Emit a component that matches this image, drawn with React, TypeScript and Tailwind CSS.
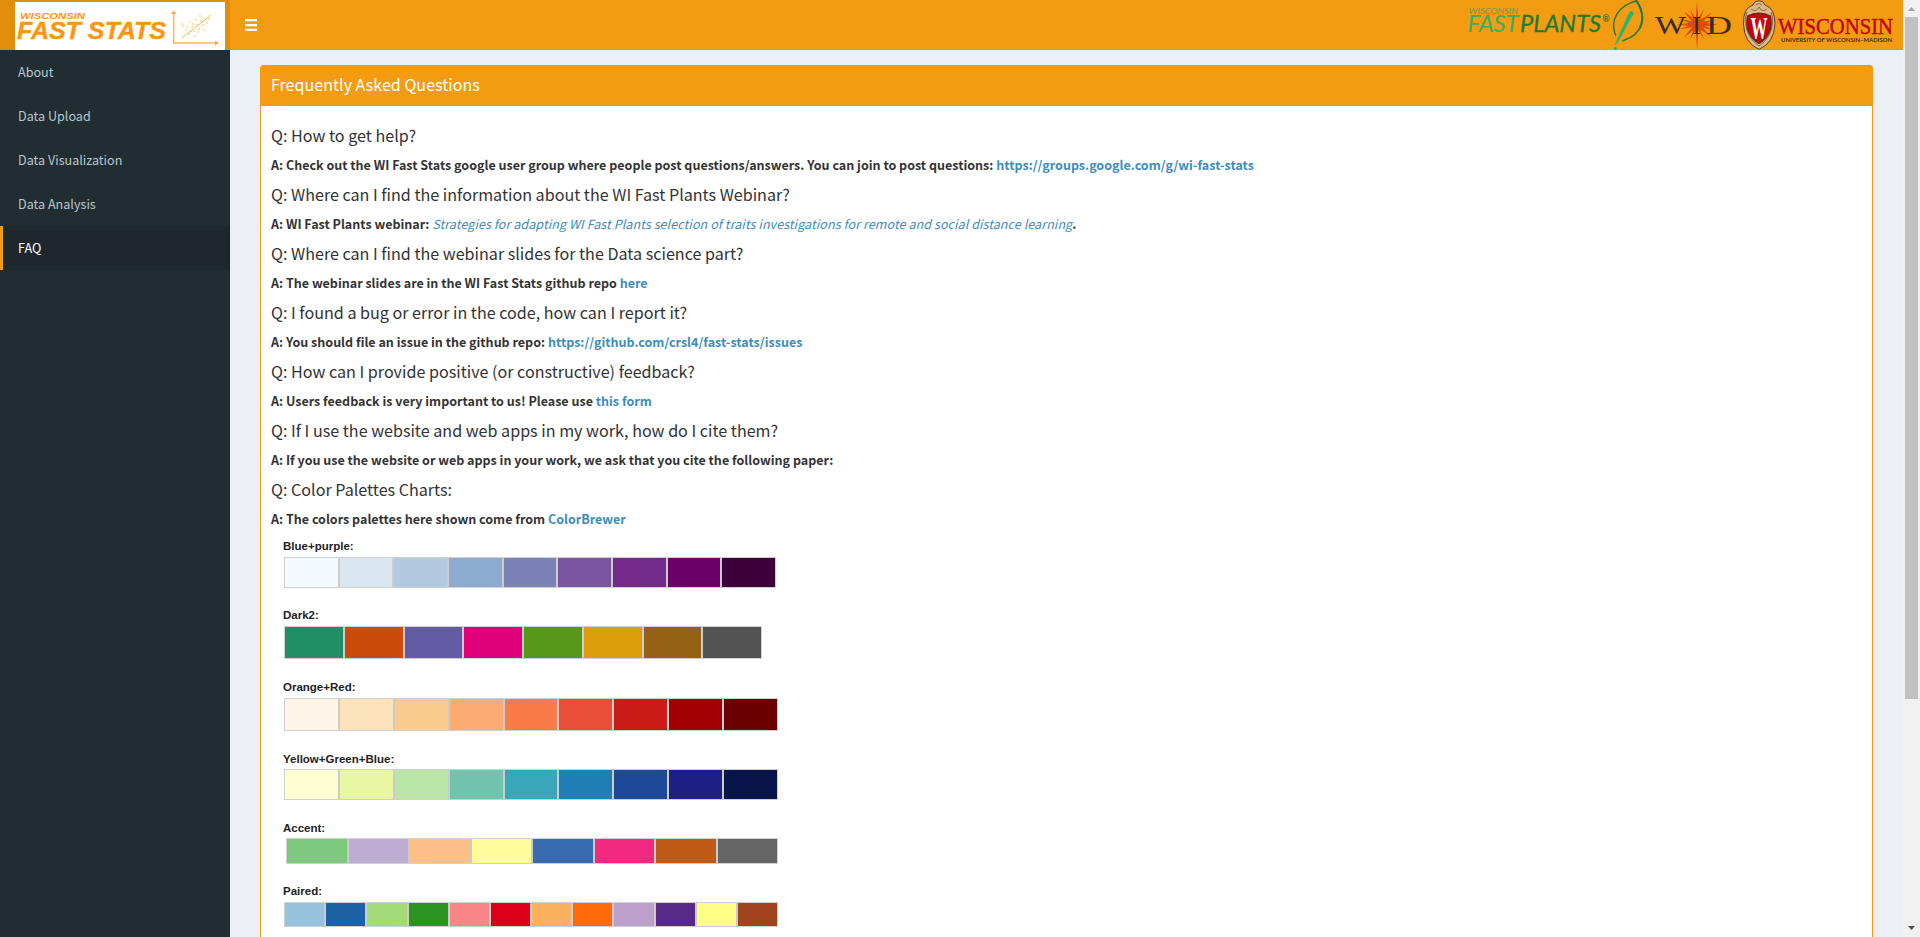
import React from "react";

const NAV = ["About", "Data Upload", "Data Visualization", "Data Analysis", "FAQ"];

const LINK = "text-[#3c8dbc]";

const FAQS: { q: string; a: React.ReactNode }[] = [
  { q: "Q: How to get help?", a: <>A: Check out the WI Fast Stats google user group where people post questions/answers. You can join to post questions: <a className={LINK}>https://groups.google.com/g/wi-fast-stats</a></> },
  { q: "Q: Where can I find the information about the WI Fast Plants Webinar?", a: <>A: WI Fast Plants webinar: <a className="font-normal tracking-[0.08px] text-[#3c8dbc] italic">Strategies for adapting WI Fast Plants selection of traits investigations for remote and social distance learning</a>.</> },
  { q: "Q: Where can I find the webinar slides for the Data science part?", a: <>A: The webinar slides are in the WI Fast Stats github repo <a className={LINK}>here</a></> },
  { q: "Q: I found a bug or error in the code, how can I report it?", a: <>A: You should file an issue in the github repo: <a className={LINK}>https://github.com/crsl4/fast-stats/issues</a></> },
  { q: "Q: How can I provide positive (or constructive) feedback?", a: <>A: Users feedback is very important to us! Please use <a className={LINK}>this form</a></> },
  { q: "Q: If I use the website and web apps in my work, how do I cite them?", a: <>A: If you use the website or web apps in your work, we ask that you cite the following paper:</> },
  { q: "Q: Color Palettes Charts:", a: <>A: The colors palettes here shown come from <a className={LINK}>ColorBrewer</a></> },
];

const PALETTES = [
  { name: "Blue+purple:", label: "h-[21px]", strip: "w-[492px] h-[31px] mb-[17px]", colors: ["#f4fafd", "#d9e7f0", "#b2c9df", "#8daccf", "#7a82b8", "#7b55a0", "#742a8a", "#6b0069", "#3e003b"] },
  { name: "Dark2:", label: "h-[21px]", strip: "w-[478px] h-[33px] mb-[18px]", colors: ["#1e8f66", "#cc4a0a", "#635aa4", "#df007a", "#579819", "#dd9d0a", "#946215", "#535353"] },
  { name: "Orange+Red:", label: "h-[21px]", strip: "w-[494px] h-[33px] mb-[18px]", colors: ["#fff4e6", "#fce2bb", "#fbcb8e", "#fcab72", "#fb7a49", "#e94f38", "#ca1b18", "#a00000", "#6b0000"] },
  { name: "Yellow+Green+Blue:", label: "h-[20px]", strip: "w-[494px] h-[31px] mb-[18px]", colors: ["#ffffd1", "#e9f7a3", "#bce6a6", "#70c4ae", "#38a7b9", "#1d7fb5", "#1c4a97", "#1d1f81", "#08144a"] },
  { name: "Accent:", label: "h-[20px]", strip: "ml-[2px] w-[492px] h-[26px] mb-[17px]", colors: ["#7fc97f", "#beadd3", "#fdc088", "#fffc99", "#386bb0", "#f12981", "#bf5a17", "#666666"] },
  { name: "Paired:", label: "h-[21px]", strip: "w-[494px] h-[25px] mb-[18px]", colors: ["#96c2dc", "#1c62a5", "#a4db7a", "#2b931f", "#f98588", "#db0017", "#fbb25e", "#ff6a0a", "#bca0cb", "#572a88", "#ffff88", "#9f441f"] },
];

const DOTS = [[183,26],[186,30],[190,22],[192,27],[194,31],[197,25],[199,29],[201,21],[203,25],[206,19],[200,16],[207,23],[189,34],[195,36],[204,30],[182,24],[187,27],[198,32],[193,24],[209,19],[196,20],[191,31]];

function FastStatsLogo() {
  return (
    <svg className="block h-12 w-[210px] bg-white" viewBox="15 2 210 48">
      <g fill="#fd960f" fontFamily="Liberation Sans, Arial, sans-serif" fontWeight="bold" fontStyle="italic">
        <text x="20" y="18.5" fontSize="8.3" textLength="65" lengthAdjust="spacingAndGlyphs">WISCONSIN</text>
        <text x="17" y="39.2" fontSize="23.5" stroke="#fd960f" strokeWidth="0.4" textLength="149" lengthAdjust="spacingAndGlyphs">FAST STATS</text>
      </g>
      <g stroke="#fbb562" strokeWidth="1.5" fill="none">
        <path d="M173.700 14V43H216" />
        <path d="M182 38L211 15" strokeWidth="1" />
      </g>
      <path d="M171 14l2.700-3.500 2.700 3.500zM215 40.500l4 2.500-4 2.500z" fill="#fca646" />
      {DOTS.map(([x, y], i) => <circle key={i} cx={x} cy={y} r="0.8" fill="#f4c02e" />)}
    </svg>
  );
}

const RAYS = [[0,-23,1.8],[0,25,1.8],[21,0,2.6],[-20,0,2.6],[15,-12,2.4],[-13,-13,2.4],[15,13,2.4],[-13,13,2.4],[7,-16,1.6],[-7,-15,1.6],[7,15,1.6],[-7,15,1.6],[20,-5,1.8],[18,6,1.8],[-18,5,1.8],[-18,-6,1.8]];

function PartnerLogos() {
  return (
    <svg className="block h-[50px] w-[443px]" viewBox="1460 0 443 50">
      <g fontFamily="Lato, sans-serif" fontStyle="italic">
        <text x="1468.5" y="13.6" fontSize="7.8" fill="#5fa63f" textLength="49.5" lengthAdjust="spacingAndGlyphs">WISCONSIN</text>
        <text x="1467.5" y="32.2" fontSize="22.5" fill="#3fae5c" stroke="#3fae5c" strokeWidth="0.2" textLength="51" lengthAdjust="spacingAndGlyphs">FAST</text>
        <text x="1520" y="32.2" fontSize="22.5" fill="#1d7a35" stroke="#1d7a35" strokeWidth="0.3" textLength="81" lengthAdjust="spacingAndGlyphs">PLANTS</text>
        <text x="1602.5" y="22" fontSize="8.5" fontWeight="bold" fontStyle="normal" fill="#1d7a35">®</text>
      </g>
      <g fill="none" stroke="#1f7c35" strokeLinecap="round">
        <path d="M1615.500 35C1609.500 20 1618 6 1636.500 0.800" strokeWidth="1.500" />
        <path d="M1636.500 0.800C1647.500 17 1643.500 34 1623 40.800" strokeWidth="1.500" />
        <path d="M1636.500 0.800C1642.500 10 1643.500 20 1640 28" strokeWidth="2" />
      </g>
      <path d="M1633.500 13Q1632 10 1629.500 12.500L1617 40.500L1615.500 44.500L1618 41.500Z" fill="#22b573" stroke="#22b573" strokeWidth="0.700" strokeLinejoin="round" />
      <circle cx="1615.200" cy="48.500" r="1.400" fill="#22b573" />
      {RAYS.map(([x, y, w], i) => {
        const n = Math.hypot(x, y);
        const px = (-y / n) * w, py = (x / n) * w;
        return <polygon key={i} points={`${1697 + px},${24.500 + py} ${1697 + x},${24.500 + y} ${1697 - px},${24.500 - py}`} fill="#df4a10" />;
      })}
      <g fontFamily="Liberation Serif, serif" fill="#3a2b20">
        <text x="1655" y="34" fontSize="26" textLength="31" lengthAdjust="spacingAndGlyphs">W</text>
        <text x="1692" y="34" fontSize="26" textLength="9" lengthAdjust="spacingAndGlyphs">I</text>
        <text x="1706" y="34" fontSize="26" textLength="26" lengthAdjust="spacingAndGlyphs">D</text>
      </g>
      <path d="M1759 0.700Q1764 1 1765 5Q1775 8 1775 24Q1774 43 1759 49.300Q1744 43 1743.500 24Q1743 8 1753 5Q1754 1 1759 0.700Z" fill="#deb98a" stroke="#5b3a22" strokeWidth="1" />
      <path d="M1751 9Q1756 13 1759 7Q1762 13 1767 9M1756 5Q1759 2 1762 5M1747 12Q1745 16 1745.800 24Q1747 38 1759 46Q1771 38 1772.500 24Q1773 16 1771 12" fill="none" stroke="#7d5a38" strokeWidth="0.900" />
      <path d="M1759 13Q1765 13 1770.500 16Q1774 34 1759 43.500Q1744 34 1747.500 16Q1753 13 1759 13Z" fill="#c5050c" stroke="#5b2a1a" strokeWidth="1.200" />
      <text x="1750.500" y="39" fontFamily="Liberation Serif, serif" fontWeight="bold" fontSize="31" fill="#fff" textLength="17" lengthAdjust="spacingAndGlyphs">W</text>
      <text x="1778" y="34" fontFamily="Liberation Serif, serif" fontSize="24" fill="#c5050c" stroke="#c5050c" strokeWidth="0.500" textLength="115" lengthAdjust="spacingAndGlyphs">WISCONSIN</text>
      <text x="1781" y="41.600" fontFamily="Lato, sans-serif" fontWeight="bold" fontSize="6.200" fill="#4a2c12" textLength="111" lengthAdjust="spacingAndGlyphs">UNIVERSITY OF WISCONSIN–MADISON</text>
    </svg>
  );
}

export default function App() {
  return (
    <div className="flex h-[937px] w-[1920px] overflow-hidden bg-[#ecf0f5] font-['Noto_Sans_CJK_JP','Noto_Sans',sans-serif] text-[#333]">
      <aside className="flex w-[230px] shrink-0 flex-col bg-[#222d32]">
        <div className="h-[50px] bg-[#e08e0b] pt-[2px] pl-[15px]"><div className="w-[210px]"><FastStatsLogo /></div></div>
        <nav className="flex flex-col text-[12.6px] leading-5">
          {NAV.map((n) => (
            <a key={n} className={n === "FAQ" ? "flex h-11 items-center border-l-[3px] border-[#f39c12] bg-[#1e282c] pl-[15px] text-white" : "flex h-11 items-center border-l-[3px] border-transparent pl-[15px] text-[#b8c7ce]"}>{n}</a>
          ))}
        </nav>
      </aside>
      <div className="flex w-[1673px] shrink-0 flex-col">
        <header className="flex h-[50px] shrink-0 items-center justify-between bg-[#f39c12] pl-[15px]">
          <svg className="h-3 w-3" viewBox="0 0 12 12" fill="#fff"><path d="M0 0h12v2.300H0zM0 4.900h12v2.300H0zM0 9.700h12V12H0z" /></svg>
          <PartnerLogos />
        </header>
        <main className="px-[30px] pt-[15px]">
          <section className="h-[1200px] rounded-[3px] border border-[#f39c12] bg-white">
            <h3 className="flex h-10 items-center bg-[#f39c12] px-[10px] pb-1 text-[16.1px] leading-none text-white">Frequently Asked Questions</h3>
            <div className="px-[10px] pt-[14px]">
              {FAQS.map((f) => (
                <div key={f.q} className="whitespace-nowrap">
                  <h4 className="h-[30px] text-[16.12px] leading-[30px] font-normal">{f.q}</h4>
                  <h5 className="h-[29px] text-[12.53px] leading-[29px] font-bold">{f.a}</h5>
                </div>
              ))}
            </div>
            <div className="flex flex-col pt-[3px] pl-[23px] font-['Liberation_Sans',Arial,sans-serif]">
              {PALETTES.map((p) => (
                <div key={p.name}>
                  <div className={"-ml-px text-[11.5px] leading-5 font-bold text-[#222] " + p.label}>{p.name}</div>
                  <div className={"flex gap-[2px] border border-[#d0d0d0] bg-[#ccc] " + p.strip}>
                    {p.colors.map((c) => <span key={c} className="flex-1" style={{ backgroundColor: c }} />)}
                  </div>
                </div>
              ))}
            </div>
          </section>
        </main>
      </div>
      <div className="flex w-[17px] shrink-0 flex-col items-center justify-between bg-[#f1f1f1]">
        <div className="flex flex-col items-center">
          <svg className="h-[17px] w-[17px]" viewBox="0 0 17 17"><path d="M5 11h7L8.500 7z" fill="#a3a3a3" /></svg>
          <div className="h-[682px] w-[13px] bg-[#c1c1c1]" />
        </div>
        <svg className="h-[17px] w-[17px]" viewBox="0 0 17 17"><path d="M5 6h7L8.500 10z" fill="#505050" /></svg>
      </div>
    </div>
  );
}
